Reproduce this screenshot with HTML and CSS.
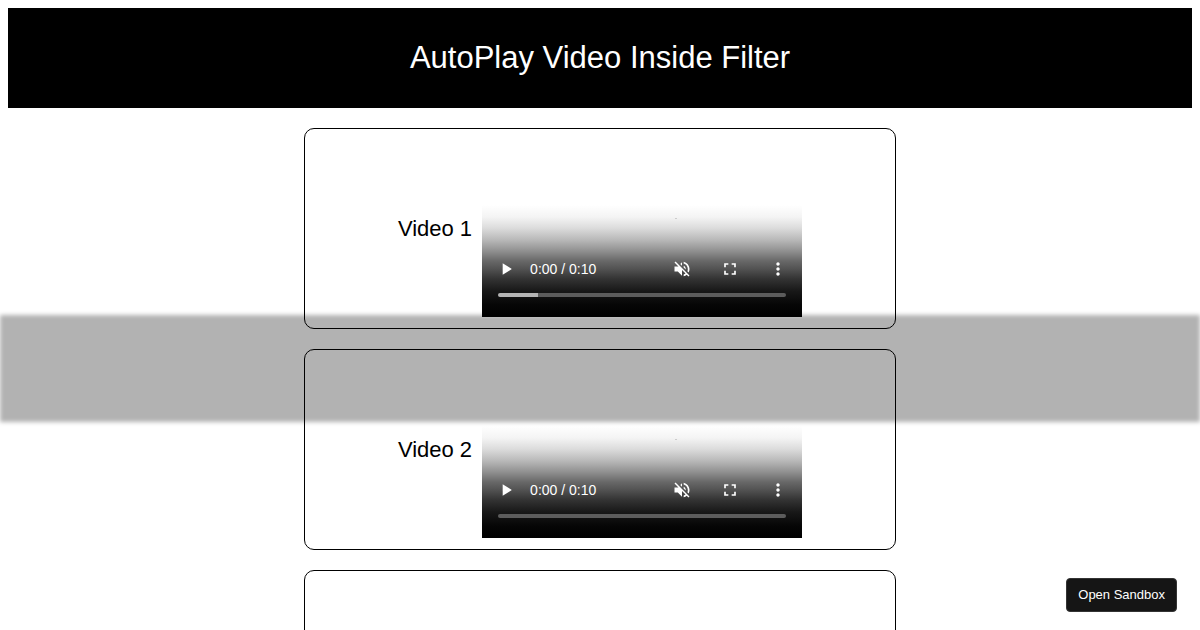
FILE: index.html
```html
<!DOCTYPE html>
<html lang="en">

  <head>
    <meta charset="UTF-8">
    <title>AutoPlay Video Inside Filter</title>
    <meta name="viewport" content="width=device-width, initial-scale=1">
    <link rel="stylesheet" href="styles.css">
  </head>

  <body>
    <!-- icons shared by every player -->
    <svg class="sprite" aria-hidden="true">
      <symbol id="icon-play" viewBox="0 0 24 24">
        <path d="M8 5v14l11-7z"/>
      </symbol>
      <symbol id="icon-muted" viewBox="0 0 24 24">
        <path d="M16.5 12c0-1.77-1.02-3.29-2.5-4.03v2.21l2.45 2.45c.03-.2.05-.41.05-.63zm2.5 0c0 .94-.2 1.82-.54 2.64l1.51 1.51C20.63 14.91 21 13.5 21 12c0-4.28-2.99-7.86-7-8.77v2.06c2.89.86 5 3.54 5 6.71zM4.27 3L3 4.27 7.73 9H3v6h4l5 5v-6.73l4.25 4.25c-.67.52-1.42.93-2.25 1.18v2.06c1.38-.31 2.63-.95 3.69-1.81L19.73 21 21 19.73l-9-9L4.27 3zM12 4L9.91 6.09 12 8.18V4z"/>
      </symbol>
      <symbol id="icon-fullscreen" viewBox="0 0 24 24">
        <path d="M7 14H5v5h5v-2H7v-3zm-2-4h2V7h3V5H5v5zm12 7h-3v2h5v-5h-2v3zM14 5v2h3v3h2V5h-5z"/>
      </symbol>
      <symbol id="icon-more" viewBox="0 0 24 24">
        <path d="M12 8c1.1 0 2-.9 2-2s-.9-2-2-2-2 .9-2 2 .9 2 2 2zm0 2c-1.1 0-2 .9-2 2s.9 2 2 2 2-.9 2-2-.9-2-2-2zm0 6c-1.1 0-2 .9-2 2s.9 2 2 2 2-.9 2-2-.9-2-2-2z"/>
      </symbol>
    </svg>

    <header class="header">
      <h1>AutoPlay Video Inside Filter</h1>
    </header>

    <main>
      <section class="card">
        <h2>Video 1</h2>
        <div class="player">
          <div class="controls">
            <button type="button" aria-label="Play"><svg><use href="#icon-play"/></svg></button>
            <span class="time">0:00 / 0:10</span>
            <button type="button" aria-label="Unmute"><svg><use href="#icon-muted"/></svg></button>
            <button type="button" aria-label="Full screen"><svg><use href="#icon-fullscreen"/></svg></button>
            <button type="button" aria-label="More options"><svg><use href="#icon-more"/></svg></button>
          </div>
          <input class="timeline" type="range" min="0" max="100" value="0" style="--buffered: 14%" aria-label="Video 1 position">
        </div>
      </section>

      <section class="card">
        <h2>Video 2</h2>
        <div class="player">
          <div class="controls">
            <button type="button" aria-label="Play"><svg><use href="#icon-play"/></svg></button>
            <span class="time">0:00 / 0:10</span>
            <button type="button" aria-label="Unmute"><svg><use href="#icon-muted"/></svg></button>
            <button type="button" aria-label="Full screen"><svg><use href="#icon-fullscreen"/></svg></button>
            <button type="button" aria-label="More options"><svg><use href="#icon-more"/></svg></button>
          </div>
          <input class="timeline" type="range" min="0" max="100" value="0" style="--buffered: 0%" aria-label="Video 2 position">
        </div>
      </section>

      <section class="card">
        <h2>Video 3</h2>
        <div class="player">
          <div class="controls">
            <button type="button" aria-label="Play"><svg><use href="#icon-play"/></svg></button>
            <span class="time">0:00 / 0:10</span>
            <button type="button" aria-label="Unmute"><svg><use href="#icon-muted"/></svg></button>
            <button type="button" aria-label="Full screen"><svg><use href="#icon-fullscreen"/></svg></button>
            <button type="button" aria-label="More options"><svg><use href="#icon-more"/></svg></button>
          </div>
          <input class="timeline" type="range" min="0" max="100" value="0" style="--buffered: 0%" aria-label="Video 3 position">
        </div>
      </section>
    </main>

    <div class="filter"></div>
    <button type="button" class="open-sandbox">Open Sandbox</button>
  </body>

</html>
```

FILE: styles.css
```css
* {
  box-sizing: border-box;
}

body {
  margin: 8px;
  background: #fff;
  color: #000;
  font-family: "Liberation Sans", Arial, sans-serif;
}

.sprite {
  display: none;
}

.header {
  display: flex;
  align-items: center;
  justify-content: center;
  min-height: 100px;
  background: #000;
  color: #fff;
}

.header h1 {
  margin: 0;
  font-size: 31px;
  font-weight: normal;
}

.card {
  display: flex;
  align-items: center;
  justify-content: center;
  gap: 10px;
  width: 50%;
  min-width: 440px;
  margin: 20px auto;
  padding: 12px 0 11px;
  border: 1px solid #000;
  border-radius: 10px;
}

.card h2 {
  margin: 0;
  font-size: 22px;
  font-weight: normal;
  line-height: 28px;
}

/* player */
.player {
  position: relative;
  display: flex;
  flex-direction: column;
  justify-content: flex-end;
  width: 320px;
  height: 176px;
  padding-bottom: 20px;
  background: linear-gradient(to top, #000 0, #060606 12px, #181818 26px, #333 38px, #525252 48px, #686868 56px, #909090 66px, #b8b8b8 77px, #dcdcdc 89px, #f4f4f4 100px, #fff 112px);
}

/* speck in the video frame */
.player::before {
  content: "";
  position: absolute;
  top: 77px;
  left: 193px;
  width: 2px;
  height: 1px;
  background: #ccc;
}

.controls {
  display: flex;
  align-items: center;
}

.controls button {
  display: flex;
  align-items: center;
  justify-content: center;
  width: 48px;
  height: 48px;
  padding: 0;
  border: 0;
  background: none;
  cursor: pointer;
}

.controls svg {
  width: 20px;
  height: 20px;
  fill: #fff;
}

.time {
  flex: 1;
  color: #fff;
  font-size: 14px;
}

.timeline {
  -webkit-appearance: none;
  appearance: none;
  height: 4px;
  margin: 0 16px;
  border-radius: 2px;
  background: linear-gradient(to right, #b4b4b4 var(--buffered), #5c5c5c var(--buffered));
}

.timeline::-webkit-slider-thumb {
  -webkit-appearance: none;
  width: 0;
  height: 0;
}

/* blurred strip over the page */
.filter {
  position: fixed;
  top: 50%;
  left: 0;
  width: 100%;
  height: 17%;
  background: rgba(0, 0, 0, 0.3);
  filter: blur(2px);
  pointer-events: none;
}

.open-sandbox {
  position: fixed;
  right: 23px;
  bottom: 18px;
  height: 34px;
  padding: 0 11px 2px;
  border: 1px solid #343434;
  border-radius: 4px;
  background: #151515;
  color: #fff;
  font-family: inherit;
  font-size: 13px;
  cursor: pointer;
}
```
